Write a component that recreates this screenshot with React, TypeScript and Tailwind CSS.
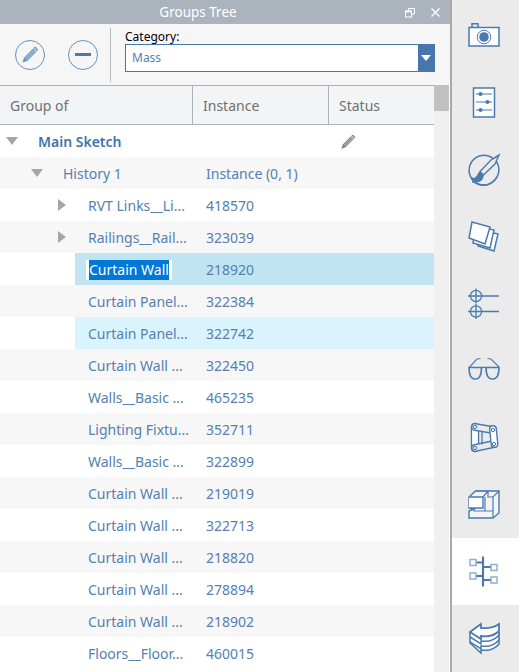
import React from 'react';

const BLUE = '#4a7bb0';
const TAB_BG = '#ebebeb';

interface Row {
  name: string;
  value: string;
  level: number;
  arrow?: 'down' | 'right';
  status?: boolean;
  state?: 'editing' | 'selected';
  bold?: boolean;
}

const rows: Row[] = [
  { name: 'Main Sketch', value: '', level: 0, arrow: 'down', status: true, bold: true },
  { name: 'History 1', value: 'Instance (0, 1)', level: 1, arrow: 'down' },
  { name: 'RVT Links__Li...', value: '418570', level: 2, arrow: 'right' },
  { name: 'Railings__Rail...', value: '323039', level: 2, arrow: 'right' },
  { name: 'Curtain Wall', value: '218920', level: 2, state: 'editing' },
  { name: 'Curtain Panel...', value: '322384', level: 2 },
  { name: 'Curtain Panel...', value: '322742', level: 2, state: 'selected' },
  { name: 'Curtain Wall ...', value: '322450', level: 2 },
  { name: 'Walls__Basic ...', value: '465235', level: 2 },
  { name: 'Lighting Fixtu...', value: '352711', level: 2 },
  { name: 'Walls__Basic ...', value: '322899', level: 2 },
  { name: 'Curtain Wall ...', value: '219019', level: 2 },
  { name: 'Curtain Wall ...', value: '322713', level: 2 },
  { name: 'Curtain Wall ...', value: '218820', level: 2 },
  { name: 'Curtain Wall ...', value: '278894', level: 2 },
  { name: 'Curtain Wall ...', value: '218902', level: 2 },
  { name: 'Floors__Floor...', value: '460015', level: 2 },
];

function Pencil({ size, color }: { size: number; color: string }) {
  return (
    <svg width={size} height={size} viewBox="0 0 17 17">
      <path d="M13.2 0.6 L16.4 3.8 L5.2 15 L0.4 16.6 L2 11.8 Z" fill={color} />
      <path d="M3.4 12.6 L13.8 2.2 M4.6 13.8 L15 3.4" stroke="#f6f6f6" strokeWidth="0.6" fill="none" />
      <path d="M11.6 2.2 L14.8 5.4" stroke="#f6f6f6" strokeWidth="0.8" fill="none" />
    </svg>
  );
}

const sideIcons: React.ReactNode[] = [
  <g key="camera" fill="none" stroke={BLUE} strokeWidth="1.5">
    <path d="M4 8.5 V4.8 H10 V8.5" />
    <rect x="1" y="8.5" width="30" height="18.5" fill="#fff" />
    <circle cx="16" cy="18" r="6.8" strokeWidth="1" />
    <circle cx="16" cy="18" r="4.8" fill={BLUE} stroke="none" />
  </g>,
  <g key="sliders" fill="none" stroke={BLUE} strokeWidth="1.5">
    <rect x="5.5" y="2" width="21" height="29" fill="#fff" />
    <path d="M8 8 H24 M8 16 H24 M8 24 H24" strokeWidth="1" />
    <circle cx="12.5" cy="8" r="2" fill={BLUE} stroke="none" />
    <circle cx="19.5" cy="16" r="2" fill={BLUE} stroke="none" />
    <circle cx="12.5" cy="24" r="2" fill={BLUE} stroke="none" />
  </g>,
  <g key="brush" fill="none" stroke={BLUE} strokeWidth="1.4">
    <path d="M25 5.5 A14.8 14.8 0 1 0 29 24" strokeWidth="1.5" />
    <path d="M5 28 A14.8 14.8 0 0 0 27 26.5 A14.8 14.8 0 0 0 30.8 15 A14.8 14.8 0 0 0 28 8" strokeWidth="1.5" />
    <path d="M31 2 L27 11 L15.5 22 L12 18.5 L23 7 Z" fill={TAB_BG} />
    <path d="M31 2 L25 6" strokeWidth="1.4" />
    <path d="M12 18.5 C9 20 10 23 6 25 L3 24 L4.5 30 L11 29 C14 28 16 25 15.5 22 Z" fill={BLUE} stroke="none" />
  </g>,
  <g key="sheets" fill="none" stroke={BLUE} strokeWidth="1.5">
    <path d="M13 10 L30 14 L26 31 L10 26 Z" fill="#fff" />
    <path d="M8 6 L26 10 L22 28 L5 23 Z" fill="#fff" />
    <path d="M4 2 L22 7 L17 24 L1 18 Z" fill="#fff" />
  </g>,
  <g key="grids" fill="none" stroke={BLUE} strokeWidth="1.3">
    <circle cx="8" cy="9" r="5.6" />
    <circle cx="8" cy="24.5" r="5.6" />
    <path d="M0 9 H31 M0 24.5 H31 M8 1.5 V16.5 M8 17 V32" />
  </g>,
  <g key="glasses" fill="none" stroke={BLUE} strokeWidth="1.6">
    <path d="M1.5 13 L9 5 L12.5 4.5 M31 13 L23 5 L19.5 4.5" strokeWidth="1.1" />
    <path d="M1 13.5 H13.5 C13.5 21 11.5 25 7.2 25 C3 25 1 20.5 1 13.5 Z" />
    <path d="M18 13.5 H31 C31 20.5 29 25 24.6 25 C20 25 18 21 18 13.5 Z" />
    <path d="M13.5 14 C15.5 12.5 16.5 12.5 18 14" strokeWidth="1.2" />
  </g>,
  <g key="frame" fill="none" strokeLinecap="round">
    <path d="M7 6 L7 27" stroke={BLUE} strokeWidth="8.5" />
    <path d="M7 6 L7 27" stroke="#fff" strokeWidth="5.8" />
    <path d="M7 6 L25 9 M7 27 L26 23" stroke={BLUE} strokeWidth="8" />
    <path d="M7 6 L25 9 M7 27 L26 23" stroke={TAB_BG} strokeWidth="5.2" />
    <path d="M25 8 L26.5 23" stroke={BLUE} strokeWidth="8" />
    <path d="M25 8 L26.5 23" stroke="#fff" strokeWidth="5.2" />
    <path d="M14 11 V23" stroke={BLUE} strokeWidth="1.3" />
    <circle cx="7" cy="6" r="1.7" stroke={BLUE} strokeWidth="1" />
    <circle cx="25" cy="9" r="1.7" stroke={BLUE} strokeWidth="1" />
    <circle cx="26" cy="23" r="1.7" stroke={BLUE} strokeWidth="1" />
    <circle cx="7" cy="27" r="1.7" stroke={BLUE} strokeWidth="1" />
  </g>,
  <g key="solid" fill="none" stroke={BLUE} strokeWidth="1.4">
    <path d="M1 9 L7.5 3 H31 V25 L25 30 H1 V23 L6 21 L1 20 Z" fill="#f4f4f4" />
    <path d="M1 9 H15 V20 H1" fill="#fff" />
    <path d="M7.5 3 H20 L15 9 M20 3 V9 H25 L31 3 M25 9 V30 M17 9 V23 H25 M6 21 V23 H17" strokeWidth="1.2" />
  </g>,
  <g key="tree" fill="none" stroke={BLUE} strokeWidth="2">
    <path d="M15 1.5 V31.5" strokeWidth="2.2" />
    <path d="M8 7.5 H15 M8 21 H15 M15 12 H23 M15 25 H23" />
    <g stroke="#8fb0d0" strokeWidth="1.5">
      <rect x="2" y="4.5" width="6" height="6" fill="#fff" />
      <rect x="2" y="18" width="6" height="6" fill="#fff" />
      <rect x="23" y="9.5" width="6" height="6" fill="#fff" />
      <rect x="23" y="22" width="6" height="6" fill="#fff" />
    </g>
  </g>,
  <g key="stack" fill="none" stroke={BLUE} strokeWidth="1.5">
    <path d="M2 20 V21 L13 31 V28 C20 29 27 27 31 22 V15" fill="#fff" />
    <path d="M2 15 V20 L13 27 V24 C20 25 27 23 31 18 V10" fill="#fff" />
    <path d="M2 10 V15 L13 22 V19 C20 20 27 18 31 13 V10" fill="#fff" />
    <path d="M13 2 L2 10 L13 17 V14 C20 15 27 13 31 9 V2 C27 5 20 6.5 13 6 Z" fill="#fff" strokeWidth="1.8" />
  </g>,
];

function TreeRow({ row, index }: { row: Row; index: number }) {
  const stripe = index % 2 === 1 ? 'bg-[#f7f7f7]' : 'bg-white';
  const indent = row.level === 0 ? 'w-[38px]' : row.level === 1 ? 'w-[63px]' : 'w-[88px]';
  const arrowGap = row.level === 0 ? 'ml-[6px]' : row.level === 1 ? 'ml-[31px]' : 'ml-[58px]';
  const fill = row.state === 'editing' ? 'bg-[#c0e4f1]' : 'bg-[#daf4fe]';
  return (
    <div className={`relative flex h-8 shrink-0 items-center ${stripe}`}>
      {row.state && <div className={`absolute inset-y-0 left-[75px] right-0 ${fill}`} />}
      <div className="relative flex w-[206px] shrink-0 items-center whitespace-nowrap">
        <div className={`flex shrink-0 items-center ${indent}`}>
          {row.arrow === 'down' && (
            <div className={`h-0 w-0 border-x-[6px] border-t-[8px] border-x-transparent border-t-[#a6a6a6] ${arrowGap}`} />
          )}
          {row.arrow === 'right' && (
            <div className={`h-0 w-0 border-y-[6px] border-l-[8px] border-y-transparent border-l-[#a6a6a6] ${arrowGap}`} />
          )}
        </div>
        {row.state === 'editing' ? (
          <span className="-ml-[2px] mt-[1px] inline-block bg-white pl-[3px] pr-[3px] leading-[20px]">
            <span className="inline-block bg-[#0078d7] leading-[20px] text-white">{row.name}</span>
          </span>
        ) : (
          <span className={row.bold ? 'font-semibold text-[#3f74ae]' : 'text-[#5480b2]'}>{row.name}</span>
        )}
      </div>
      <div className="relative w-[135px] shrink-0 whitespace-nowrap text-[#5480b2]">{row.value}</div>
      {row.status && <Pencil size={15} color="#808080" />}
    </div>
  );
}

export default function App() {
  return (
    <div
      className="flex h-[672px] w-[519px] overflow-hidden bg-white text-[14px]"
      style={{ fontFamily: '"Noto Sans", "Open Sans", sans-serif' }}
    >
      <div className="flex w-[450px] shrink-0 flex-col">
        {/* Title bar */}
        <div className="relative flex h-6 shrink-0 items-center justify-center bg-[#abb3bd] pr-[54px] text-[13.5px] text-white">
          Groups Tree
          <svg className="absolute left-[405px] top-[8px]" width="10" height="10" viewBox="0 0 10 10" fill="none" stroke="#fff">
            <path d="M3.5 2.5 V0.5 H9.5 V6 H7" />
            <rect x="0.5" y="3" width="6" height="6" strokeWidth="1" />
            <path d="M1 3.5 H6" strokeWidth="1.6" />
          </svg>
          <svg className="absolute left-[431px] top-[8px]" width="9" height="9" viewBox="0 0 9 9" stroke="#fff" strokeWidth="1.3">
            <path d="M0.5 0.5 L8.5 8.5 M8.5 0.5 L0.5 8.5" />
          </svg>
        </div>

        {/* Toolbar */}
        <div className="flex h-[61px] shrink-0 items-center bg-[#f6f6f6]">
          <div className="ml-[15px] flex h-[30px] w-[30px] items-center justify-center rounded-full border-[1.5px] border-[#6591bc]">
            <Pencil size={17} color="#6c94be" />
          </div>
          <div className="ml-[23px] flex h-[30px] w-[30px] items-center justify-center rounded-full border-[1.5px] border-[#6591bc]">
            <div className="h-[3px] w-[16px] bg-[#4a7bb0]" />
          </div>
          <div className="ml-[12px] h-[54px] w-px bg-[#b8bec8]" />
          <div className="ml-[14px] flex w-[310px] flex-col self-start pt-[6px]">
            <div className="h-[14px] text-[12px] leading-[14px] text-black">Category:</div>
            <div className="flex h-[28px] border border-[#4676ab] bg-white">
              <div className="flex flex-1 items-center pl-[6px] text-[12px] text-[#5480b2]">Mass</div>
              <div className="flex w-[16px] items-center justify-center bg-[#4676ab]">
                <div className="h-0 w-0 border-x-[5px] border-t-[6px] border-x-transparent border-t-white" />
              </div>
            </div>
          </div>
        </div>

        <div className="flex min-h-0 flex-1">
          <div className="flex w-[434px] shrink-0 flex-col overflow-hidden">
            {/* Column headers */}
            <div className="flex h-[40px] shrink-0 items-center border-y border-[#aab2c0] bg-[#f3f4f6] text-[#707070]">
              <div className="flex h-full w-[193px] items-center border-r border-[#aab2c0] pl-[10px]">Group of</div>
              <div className="flex h-full w-[136px] items-center border-r border-[#aab2c0] pl-[10px]">Instance</div>
              <div className="flex h-full items-center pl-[10px]">Status</div>
            </div>
            {rows.map((row, i) => (
              <TreeRow key={i} row={row} index={i} />
            ))}
          </div>
          {/* Scrollbar */}
          <div className="w-[15px] shrink-0 bg-[#f0f0f0]">
            <div className="h-[26px] bg-[#c1c1c1]" />
          </div>
        </div>
      </div>

      {/* Side tabs */}
      <div className="flex w-[69px] shrink-0 flex-col border-l-2 border-[#a9a9a9] bg-[#ebebeb] pt-[2px]">
        {sideIcons.map((icon, i) => (
          <div
            key={i}
            className={`flex h-[67px] shrink-0 items-center justify-center pr-[2px] ${i === 8 ? 'bg-white' : ''}`}
          >
            <svg width="33" height="33" viewBox="0 0 33 33">
              {icon}
            </svg>
          </div>
        ))}
      </div>
    </div>
  );
}
